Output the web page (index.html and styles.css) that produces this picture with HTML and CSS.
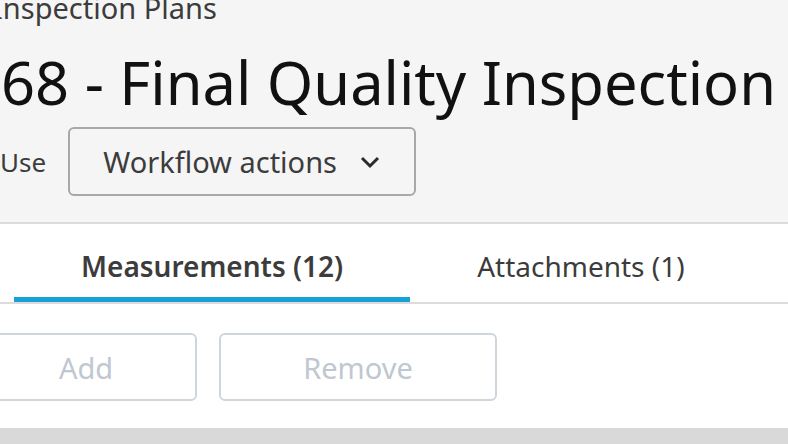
FILE: index.html
```html
<!DOCTYPE html>
<html lang="en">
<head>
    <meta charset="UTF-8">
    <meta name="viewport" content="width=device-width, initial-scale=1.0">
    <title>Final Quality Inspection</title>
    <link rel="stylesheet" href="styles.css">
</head>
<body>
    <div class="header">
        <div class="crumb">Inspection Plans</div>
        <h1 class="title">68 - Final Quality Inspection</h1>
        <div class="actions">
            <span class="status">Use</span>
            <button class="workflow">
                Workflow actions
                <svg width="22" height="14" viewBox="0 0 22 14"><path d="M3 3 L11 11 L19 3" fill="none" stroke="#2b2b2b" stroke-width="3"/></svg>
            </button>
        </div>
    </div>
    <div class="tabs">
        <div class="tab active">Measurements (12)</div>
        <div class="tab">Attachments (1)</div>
    </div>
    <div class="toolbar">
        <button class="button add" disabled>Add</button>
        <button class="button remove" disabled>Remove</button>
    </div>
    <div class="footer"></div>
</body>
</html>
```

FILE: styles.css
```css
body {
    font-family: "Noto Sans", sans-serif;
    margin: 0;
    width: 788px;
    height: 444px;
    overflow: hidden;
    background-color: #fff;
    color: #3c3c3c;
}

.header {
    background-color: #f5f5f5;
    height: 222px;
    border-bottom: 2px solid #dcdcdc;
    overflow: hidden;
}

.crumb {
    font-size: 29px;
    line-height: 29px;
    margin-top: -7px;
    margin-left: -7px;
    white-space: nowrap;
}

.title {
    font-size: 59.6px;
    font-weight: normal;
    line-height: 60px;
    color: #111;
    margin: 30px 0 0 1px;
    white-space: nowrap;
}

.actions {
    display: flex;
    align-items: center;
    gap: 22px;
    margin-top: 15px;
}

.status {
    font-size: 26px;
}

.workflow {
    display: flex;
    align-items: center;
    justify-content: center;
    gap: 22px;
    width: 348px;
    height: 69px;
    font-family: inherit;
    font-size: 29px;
    color: #3c3c3c;
    background-color: #f5f5f5;
    border: 2px solid #a8a8a8;
    border-radius: 6px;
    padding: 0;
}

.tabs {
    display: flex;
    padding-left: 14px;
    border-bottom: 2px solid #dcdcdc;
}

.tab {
    height: 63px;
    padding: 10px 67px 0;
    display: flex;
    align-items: center;
    font-size: 28px;
    border-bottom: 5px solid transparent;
}

.tab.active {
    font-weight: 600;
    border-bottom-color: #16a1d9;
}

.toolbar {
    display: flex;
    gap: 22px;
    margin: 29px 0 0 -25px;
}

.button {
    height: 68px;
    font-family: inherit;
    font-size: 29px;
    color: #bfc7d1;
    background-color: #fff;
    border: 2px solid #cfd5dc;
    border-radius: 6px;
}

.add {
    width: 222px;
}

.remove {
    width: 278px;
}

.footer {
    margin-top: 27px;
    height: 20px;
    background-color: #d9d9d9;
}
```
